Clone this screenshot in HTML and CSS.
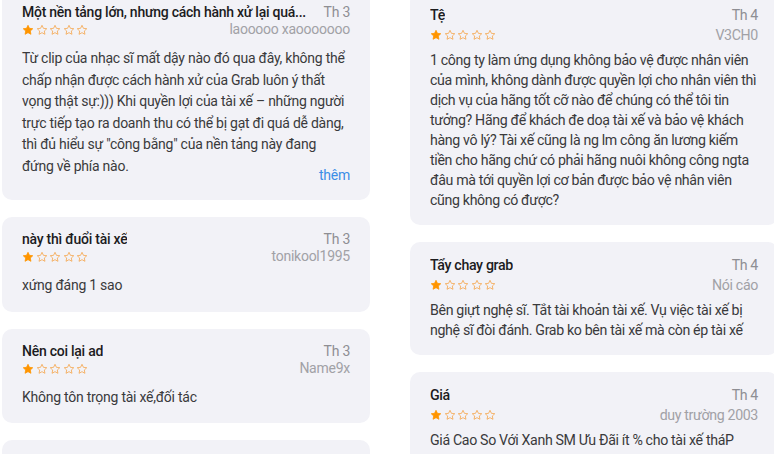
FILE: index.html
```html
<!DOCTYPE html>
<html lang="vi">
<head>
    <meta charset="UTF-8">
    <meta name="viewport" content="width=device-width, initial-scale=1.0">
    <title>Đánh giá</title>
    <link rel="stylesheet" href="styles.css">
</head>
<body>
    <svg width="0" height="0" style="position:absolute">
        <defs>
            <symbol id="star" viewBox="0 0 24 24">
                <path d="M12 2.6l2.85 6.05 6.65.8-4.9 4.55 1.3 6.6L12 17.3l-5.9 3.3 1.3-6.6-4.9-4.55 6.65-.8z"/>
            </symbol>
        </defs>
    </svg>

    <div class="page">
        <!-- left column -->
        <div class="col col-left">
            <div class="card">
                <div class="card-head">
                    <span class="title">Một nền tảng lớn, nhưng cách hành xử lại quá...</span>
                    <span class="date">Th 3</span>
                </div>
                <div class="card-sub">
                    <span class="stars">
                        <svg class="star full"><use href="#star"/></svg><svg class="star"><use href="#star"/></svg><svg class="star"><use href="#star"/></svg><svg class="star"><use href="#star"/></svg><svg class="star"><use href="#star"/></svg>
                    </span>
                    <span class="author">laooooo xaooooooo</span>
                </div>
                <p class="body">Từ clip của nhạc sĩ mất dậy nào đó qua đây, không thể chấp nhận được cách hành xử của Grab luôn ý thất vọng thật sự:))) Khi quyền lợi của tài xế – những người trực tiếp tạo ra doanh thu có thể bị gạt đi quá dễ dàng, thì đủ hiểu sự "công bằng" của nền tảng này đang đứng về phía nào.</p>
                <div class="more">thêm</div>
            </div>

            <div class="card">
                <div class="card-head">
                    <span class="title">này thì đuổi tài xế</span>
                    <span class="date">Th 3</span>
                </div>
                <div class="card-sub">
                    <span class="stars">
                        <svg class="star full"><use href="#star"/></svg><svg class="star"><use href="#star"/></svg><svg class="star"><use href="#star"/></svg><svg class="star"><use href="#star"/></svg><svg class="star"><use href="#star"/></svg>
                    </span>
                    <span class="author">tonikool1995</span>
                </div>
                <p class="body">xứng đáng 1 sao</p>
            </div>

            <div class="card">
                <div class="card-head">
                    <span class="title">Nên coi lại ad</span>
                    <span class="date">Th 3</span>
                </div>
                <div class="card-sub">
                    <span class="stars">
                        <svg class="star full"><use href="#star"/></svg><svg class="star"><use href="#star"/></svg><svg class="star"><use href="#star"/></svg><svg class="star"><use href="#star"/></svg><svg class="star"><use href="#star"/></svg>
                    </span>
                    <span class="author">Name9x</span>
                </div>
                <p class="body">Không tôn trọng tài xế,đối tác</p>
            </div>

            <div class="card">
                <div class="card-head">
                    <span class="title">Thất vọng về Grab</span>
                    <span class="date">Th 3</span>
                </div>
            </div>
        </div>

        <!-- right column -->
        <div class="col col-right">
            <div class="card">
                <div class="card-head">
                    <span class="title">Tệ</span>
                    <span class="date">Th 4</span>
                </div>
                <div class="card-sub">
                    <span class="stars">
                        <svg class="star full"><use href="#star"/></svg><svg class="star"><use href="#star"/></svg><svg class="star"><use href="#star"/></svg><svg class="star"><use href="#star"/></svg><svg class="star"><use href="#star"/></svg>
                    </span>
                    <span class="author">V3CH0</span>
                </div>
                <p class="body">1 công ty làm ứng dụng không bảo vệ được nhân viên của mình, không dành được quyền lợi cho nhân viên thì dịch vụ của hãng tốt cỡ nào để chúng có thể tôi tin tưởng? Hãng để khách đe doạ tài xế và bảo vệ khách hàng vô lý? Tài xế cũng là ng lm công ăn lương kiếm tiền cho hãng chứ có phải hãng nuôi không công ngta đâu mà tới quyền lợi cơ bản được bảo vệ nhân viên cũng không có được?</p>
            </div>

            <div class="card">
                <div class="card-head">
                    <span class="title">Tẩy chay grab</span>
                    <span class="date">Th 4</span>
                </div>
                <div class="card-sub">
                    <span class="stars">
                        <svg class="star full"><use href="#star"/></svg><svg class="star"><use href="#star"/></svg><svg class="star"><use href="#star"/></svg><svg class="star"><use href="#star"/></svg><svg class="star"><use href="#star"/></svg>
                    </span>
                    <span class="author">Nói cáo</span>
                </div>
                <p class="body">Bên giựt nghệ sĩ. Tắt tài khoản tài xế. Vụ việc tài xế bị nghệ sĩ đòi đánh. Grab ko bên tài xế mà còn ép tài xế</p>
            </div>

            <div class="card">
                <div class="card-head">
                    <span class="title">Giá</span>
                    <span class="date">Th 4</span>
                </div>
                <div class="card-sub">
                    <span class="stars">
                        <svg class="star full"><use href="#star"/></svg><svg class="star"><use href="#star"/></svg><svg class="star"><use href="#star"/></svg><svg class="star"><use href="#star"/></svg><svg class="star"><use href="#star"/></svg>
                    </span>
                    <span class="author">duy trường 2003</span>
                </div>
                <p class="body">Giá Cao So Với Xanh SM Ưu Đãi ít % cho tài xế tháP</p>
            </div>
        </div>
    </div>
</body>
</html>
```

FILE: styles.css
```css
body {
    margin: 0;
    height: 454px;
    overflow: hidden;
    background: #fff;
    font-family: Roboto, "Noto Sans", sans-serif;
    color: #3a3a3c;
}
.page {
    display: flex;
    gap: 40px;
    padding-left: 2px;
}
.col {
    width: 368px;
    flex: none;
    display: flex;
    flex-direction: column;
    gap: 17px;
}
.col-left {
    margin-top: -10px;
    font-size: 14px;
    line-height: 21.5px;
    letter-spacing: -0.25px;
}
.col-right {
    margin-top: -8px;
    font-size: 14.2px;
    line-height: 20px;
    letter-spacing: -0.35px;
}
.card {
    background: #f2f2f7;
    border-radius: 10px;
    padding: 12px 20px 15px;
}
.col-right .card {
    padding: 12px 20px 15px;
}
.card-head {
    display: flex;
    justify-content: space-between;
    align-items: baseline;
    gap: 10px;
    line-height: 20px;
}
.col-right .card-head {
    line-height: 22px;
}
.title {
    font-weight: 500;
    color: #1c1c1e;
    white-space: nowrap;
    overflow: hidden;
}
.date {
    color: #8e8e93;
    white-space: nowrap;
}
.card-sub {
    display: flex;
    justify-content: space-between;
    align-items: center;
    height: 16px;
}
.col-right .card-sub {
    height: 17px;
}
.stars {
    display: flex;
    gap: 1.5px;
}
.star {
    width: 12px;
    height: 12px;
    fill: none;
    stroke: #f5a54a;
    stroke-width: 1.6;
}
.star.full {
    fill: #ff9500;
    stroke: #ff9500;
}
.author {
    color: #a1a1a6;
}
.body {
    margin: 10px 0 0;
}
.col-right .body {
    margin-top: 7px;
}
.more {
    margin-top: -12px;
    line-height: 20px;
    text-align: right;
    color: #3b8ee6;
}
```
